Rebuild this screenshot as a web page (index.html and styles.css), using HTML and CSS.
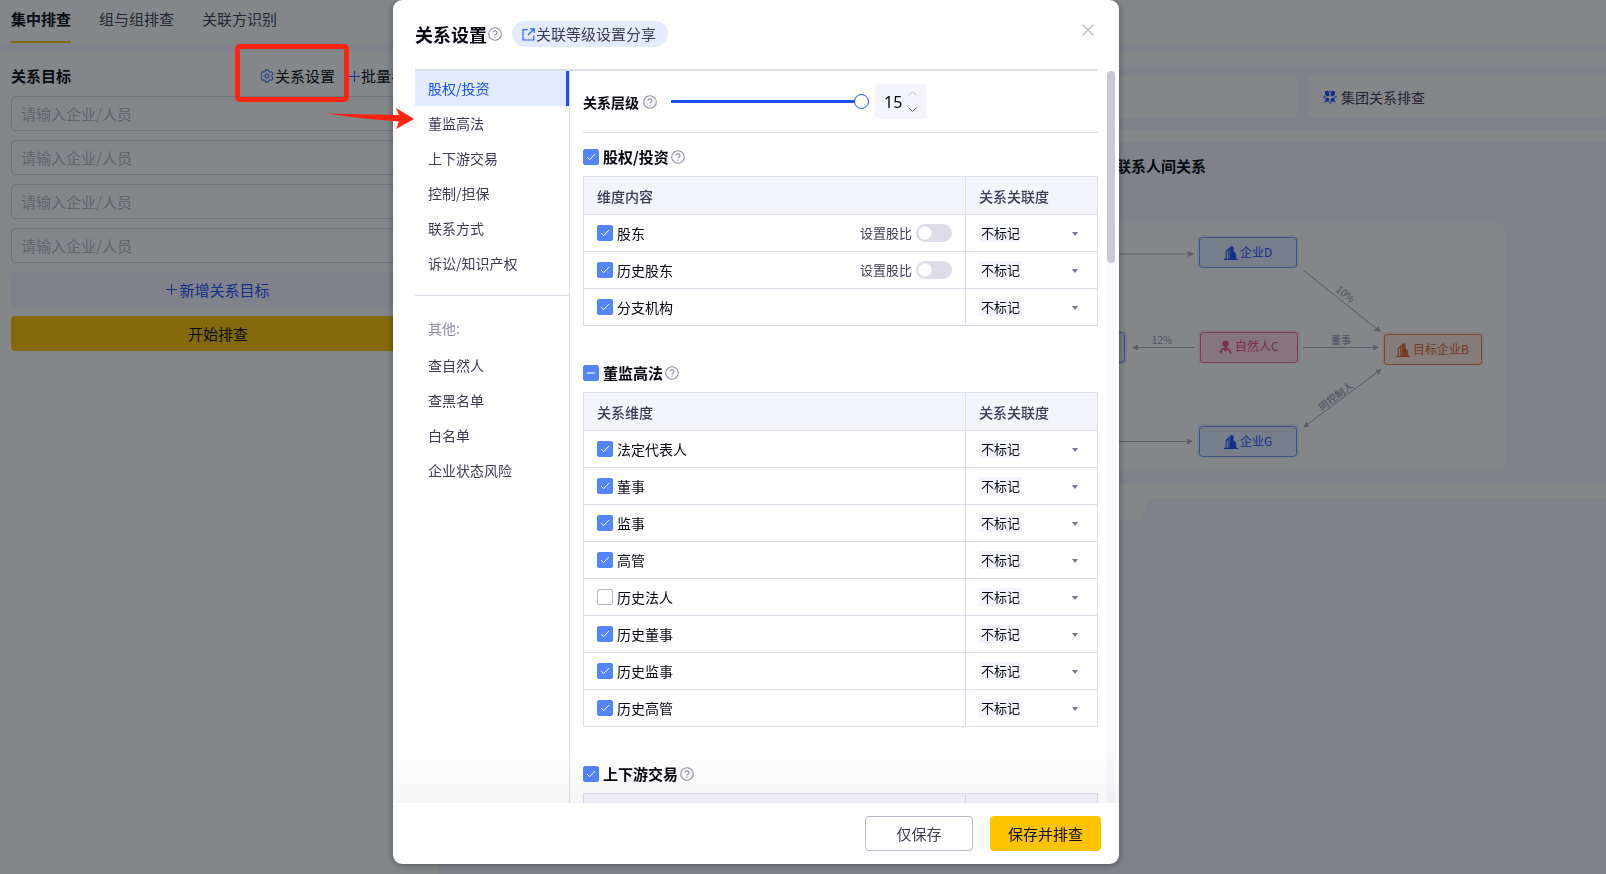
FILE: index.html
```html
<!DOCTYPE html>
<html lang="zh-CN">
<head>
<meta charset="utf-8">
<title>关系设置</title>
<link rel="stylesheet" href="styles.css">
</head>
<body>
<svg class="defs" aria-hidden="true">
  <symbol id="help" viewBox="0 0 14 14"><circle cx="7" cy="7" r="6.3" fill="none" stroke="#8c8da3" stroke-width="1.1"/><path d="M5.1 5.6a1.9 1.9 0 1 1 2.9 1.6c-.7.4-1 .7-1 1.3" fill="none" stroke="#8c8da3" stroke-width="1.1"/><circle cx="7" cy="10.2" r=".7" fill="#8c8da3"/></symbol>
  <symbol id="building" viewBox="0 0 14 14"><path d="M0 12.700h14V14H0zM1.700 13V5.200L5.300 1.500V13H4.200V4.700L2.800 6v7zM5.800 13V1L8 0l1.600 1.200v4l2.600 2.600V13z"/></symbol>
  <symbol id="person" viewBox="0 0 14 14"><circle cx="7" cy="3.4" r="3.4"/><path d="M5.900 6h2.200v1.600c3.400.6 5.300 2.700 5.300 6.400h-2c0-2.200-.9-3.700-2.500-4.300l-.8 1.800h-2.200l-.8-1.800C3.500 10.300 2.600 11.800 2.600 14h-2c0-3.700 1.900-5.800 5.300-6.400z"/></symbol>
</svg>

<div class="page">
  <nav class="tabs">
    <a class="tab tab-active" href="#">集中排查</a>
    <a class="tab" href="#">组与组排查</a>
    <a class="tab" href="#">关联方识别</a>
  </nav>
  <div class="workspace">
    <form class="targets">
      <div class="targets-head">
        <h2>关系目标</h2>
        <div class="targets-tools">
          <button type="button" class="tool"><svg width="14" height="14" viewBox="0 0 14 14" fill="none" stroke="#1a4fff" stroke-linejoin="round"><path d="M5.600.8h2.800l.4 1.700 1.200.7 1.700-.5 1.400 2.400-1.200 1.200v1.400l1.200 1.200-1.400 2.400-1.700-.5-1.200.7-.4 1.700H5.600l-.4-1.700-1.200-.7-1.700.5L.9 8.900l1.200-1.200V6.300L.9 5.100l1.400-2.400 1.700.5 1.200-.7z"/><circle cx="7" cy="7" r="2"/></svg>关系设置</button>
          <button type="button" class="tool tool-batch"><svg width="11" height="11" viewBox="0 0 11 11" stroke="#1a4fff"><path d="M5.500 0v11M0 5.500h11"/></svg>批量导入</button>
        </div>
      </div>
      <input type="text" aria-label="关系目标1" placeholder="请输入企业/人员">
      <input type="text" aria-label="关系目标2" placeholder="请输入企业/人员">
      <input type="text" aria-label="关系目标3" placeholder="请输入企业/人员">
      <input type="text" aria-label="关系目标4" placeholder="请输入企业/人员">
      <button type="button" class="add"><svg width="11" height="11" viewBox="0 0 11 11" stroke="#1a4fff"><path d="M5.500 0v11M0 5.500h11"/></svg>新增关系目标</button>
      <button type="button" class="start">开始排查</button>
    </form>
    <main class="results">
      <div class="modes">
        <div class="mode"></div>
        <a class="mode" href="#"><svg width="14" height="14" viewBox="0 0 14 14"><g fill="#1a4fff"><path d="M2 1h3l1.300 1.300v4H4L2 4.500zM12 1H9L7.700 2.300v4H10l2-1.800z"/><circle cx="4.300" cy="9.800" r="2.100"/><circle cx="9.700" cy="9.800" r="2.100"/></g><g fill="#6a94ff"><circle cx="1.400" cy="7" r="1.400"/><circle cx="12.600" cy="7" r="1.400"/><circle cx="7" cy="12.600" r="1.300"/><circle cx="7" cy="1.300" r="1"/><circle cx="2.200" cy="11.800" r="1"/><circle cx="11.800" cy="11.800" r="1"/></g></svg>集团关系排查</a>
      </div>
      <section class="example">
        <h2>排查企业及联系人间关系</h2>
        <div class="canvas">
          <svg class="graph" width="412" height="248" viewBox="1093 223 412 248">
            <defs><marker id="arrow" viewBox="0 0 6 6" refX="5" refY="3" markerWidth="6" markerHeight="6" markerUnits="userSpaceOnUse" orient="auto-start-reverse"><path d="M0 0l6 3-6 3z" fill="#a9aaba"/></marker></defs>
            <g stroke="#a9aaba">
              <path d="M1093 254h100" marker-end="url(#arrow)"/>
              <path d="M1093 441.500h99" marker-end="url(#arrow)"/>
              <path d="M1194 347.500h-61" marker-end="url(#arrow)"/>
              <path d="M1303 347.500h75" marker-end="url(#arrow)"/>
              <path d="M1303 270l77 61.500" marker-end="url(#arrow)"/>
              <path d="M1304 427l77-57.500" marker-start="url(#arrow)" marker-end="url(#arrow)"/>
            </g>
            <g class="edge-text">
              <text x="1162" y="344">12%</text>
              <text x="1341" y="344">董事</text>
              <text transform="translate(1343 297) rotate(38.600)">10%</text>
              <text transform="translate(1338 399) rotate(-36.700)">同控制人</text>
            </g>
            <g class="node node-blue"><rect class="glow" x="1026" y="331" width="101" height="33" rx="4"/><rect x="1027.500" y="332.500" width="97" height="30" rx="3"/></g>
            <g class="node node-blue"><rect class="glow" x="1197.500" y="235.500" width="101" height="33" rx="4"/><rect x="1199.500" y="237.500" width="97" height="30" rx="3"/><use href="#building" x="1224" y="246" width="14" height="14"/><text x="1240" y="257">企业D</text></g>
            <g class="node node-pink"><rect class="glow" x="1198.500" y="330.500" width="101" height="33" rx="4"/><rect x="1200.500" y="332.500" width="97" height="30" rx="3"/><use href="#person" x="1219" y="340" width="13" height="14"/><text x="1235" y="351">自然人C</text></g>
            <g class="node node-orange"><rect class="glow" x="1382.500" y="332.500" width="101" height="33" rx="4"/><rect x="1384.500" y="334.500" width="97" height="30" rx="3"/><use href="#building" x="1396" y="343" width="14" height="14"/><text x="1413" y="354">目标企业B</text></g>
            <g class="node node-blue"><rect class="glow" x="1197.500" y="424.500" width="101" height="33" rx="4"/><rect x="1199.500" y="426.500" width="97" height="30" rx="3"/><use href="#building" x="1224" y="435" width="14" height="14"/><text x="1240" y="446">企业G</text></g>
          </svg>
        </div>
      </section>
      <section class="lower"><div class="lower-tab"></div></section>
    </main>
  </div>
</div>

<div class="overlay">
  <div class="modal" role="dialog" aria-labelledby="modal-title">
    <header class="modal-head">
      <h1 id="modal-title">关系设置</h1>
      <svg class="help" width="14" height="14"><use href="#help"/></svg>
      <a class="share" href="#"><svg width="13" height="13" viewBox="0 0 13 13" fill="none" stroke="#2a60ff" stroke-width="1.200"><path d="M5.500 1.600H1v10.400h10.800V7.500M8 .8h4.200V5M12 1L6 7"/></svg>关联等级设置分享</a>
      <button type="button" class="close" aria-label="关闭"><svg width="12" height="12" viewBox="0 0 12 12" stroke="#bfc0c4" stroke-width="1.400"><path d="M.5.500l11 11M11.500.500l-11 11"/></svg></button>
    </header>
    <div class="modal-body">
      <nav class="side">
        <ul>
          <li><a class="side-active" href="#">股权/投资</a></li>
          <li><a href="#">董监高法</a></li>
          <li><a href="#">上下游交易</a></li>
          <li><a href="#">控制/担保</a></li>
          <li><a href="#">联系方式</a></li>
          <li><a href="#">诉讼/知识产权</a></li>
        </ul>
        <p>其他:</p>
        <ul>
          <li><a href="#">查自然人</a></li>
          <li><a href="#">查黑名单</a></li>
          <li><a href="#">白名单</a></li>
          <li><a href="#">企业状态风险</a></li>
        </ul>
      </nav>
      <div class="settings">
        <div class="level">
          <label for="level">关系层级</label>
          <svg class="help" width="14" height="14"><use href="#help"/></svg>
          <input id="level" type="range" min="1" max="15" value="15">
          <div class="stepper">
            <input type="text" value="15" aria-label="关系层级数值">
            <div class="steps">
              <button type="button" aria-label="增加" disabled><svg width="9" height="5" viewBox="0 0 9 5" fill="none" stroke="#c3c4d2"><path d="M.5 4.500l4-4 4 4"/></svg></button>
              <button type="button" aria-label="减少"><svg width="9" height="5" viewBox="0 0 9 5" fill="none" stroke="#66677d"><path d="M.5.500l4 4 4-4"/></svg></button>
            </div>
          </div>
        </div>

        <section class="group">
          <h2><label><input type="checkbox" checked>股权/投资</label><svg class="help" width="14" height="14"><use href="#help"/></svg></h2>
          <table>
            <thead><tr><th>维度内容</th><th class="rank">关系关联度</th></tr></thead>
            <tbody>
              <tr><td><div class="cell"><label><input type="checkbox" checked>股东</label><label class="ratio">设置股比<input type="checkbox" role="switch" class="switch"></label></div></td><td><div class="pick"><select aria-label="股东关联度"><option>不标记</option></select></div></td></tr>
              <tr><td><div class="cell"><label><input type="checkbox" checked>历史股东</label><label class="ratio">设置股比<input type="checkbox" role="switch" class="switch"></label></div></td><td><div class="pick"><select aria-label="历史股东关联度"><option>不标记</option></select></div></td></tr>
              <tr><td><div class="cell"><label><input type="checkbox" checked>分支机构</label></div></td><td><div class="pick"><select aria-label="分支机构关联度"><option>不标记</option></select></div></td></tr>
            </tbody>
          </table>
        </section>

        <section class="group">
          <h2><label><input type="checkbox" class="partial">董监高法</label><svg class="help" width="14" height="14"><use href="#help"/></svg></h2>
          <table>
            <thead><tr><th>关系维度</th><th class="rank">关系关联度</th></tr></thead>
            <tbody>
              <tr><td><div class="cell"><label><input type="checkbox" checked>法定代表人</label></div></td><td><div class="pick"><select aria-label="法定代表人关联度"><option>不标记</option></select></div></td></tr>
              <tr><td><div class="cell"><label><input type="checkbox" checked>董事</label></div></td><td><div class="pick"><select aria-label="董事关联度"><option>不标记</option></select></div></td></tr>
              <tr><td><div class="cell"><label><input type="checkbox" checked>监事</label></div></td><td><div class="pick"><select aria-label="监事关联度"><option>不标记</option></select></div></td></tr>
              <tr><td><div class="cell"><label><input type="checkbox" checked>高管</label></div></td><td><div class="pick"><select aria-label="高管关联度"><option>不标记</option></select></div></td></tr>
              <tr><td><div class="cell"><label><input type="checkbox">历史法人</label></div></td><td><div class="pick"><select aria-label="历史法人关联度"><option>不标记</option></select></div></td></tr>
              <tr><td><div class="cell"><label><input type="checkbox" checked>历史董事</label></div></td><td><div class="pick"><select aria-label="历史董事关联度"><option>不标记</option></select></div></td></tr>
              <tr><td><div class="cell"><label><input type="checkbox" checked>历史监事</label></div></td><td><div class="pick"><select aria-label="历史监事关联度"><option>不标记</option></select></div></td></tr>
              <tr><td><div class="cell"><label><input type="checkbox" checked>历史高管</label></div></td><td><div class="pick"><select aria-label="历史高管关联度"><option>不标记</option></select></div></td></tr>
            </tbody>
          </table>
        </section>

        <section class="group">
          <h2><label><input type="checkbox" checked>上下游交易</label><svg class="help" width="14" height="14"><use href="#help"/></svg></h2>
          <table>
            <thead><tr><th></th><th class="rank"></th></tr></thead>
          </table>
        </section>
      </div>
      <div class="scrollbar"><div class="thumb"></div></div>
      <div class="fade"></div>
    </div>
    <footer class="modal-foot">
      <button type="button" class="btn">仅保存</button>
      <button type="button" class="btn btn-primary">保存并排查</button>
    </footer>
  </div>
</div>

<div class="callout-box"></div>
<svg class="callout-arrow" width="90" height="22" viewBox="0 0 90 22"><path d="M0 5.500L74 7 71 0l18 11-18 10 3-7.500C50 12 24 9 0 5.500z" fill="#ff2312"/></svg>
</body>
</html>
```
FILE: styles.css
```css
* { box-sizing: border-box; }

body {
  margin: 0;
  height: 100vh;
  overflow: hidden;
  background: #fff;
  color: #05060f;
  font: 15px/22px "Noto Sans CJK SC", "Noto Sans", sans-serif;
}

h1, h2, p, ul { margin: 0; padding: 0; font-weight: 400; }
ul { list-style: none; }
a { color: inherit; text-decoration: none; }
button, input, select { margin: 0; padding: 0; border: 0; background: none; color: inherit; font: inherit; }
svg { flex: none; }
.defs { position: absolute; width: 0; height: 0; }

/* Page behind the dialog */
.page { display: flex; flex-direction: column; height: 100vh; }
.tabs {
  display: flex;
  gap: 28px;
  height: 51px;
  padding: 0 11px;
  border-bottom: 8px solid #f4f4ff;
}
.tab { padding-top: 8px; color: #3c3b54; }
.tab-active { border-bottom: 2px solid #ffc400; color: #05060f; font-weight: 700; }
.workspace { display: flex; flex: 1; min-height: 0; }

.targets {
  display: flex;
  flex: none;
  flex-direction: column;
  gap: 9px;
  width: 438px;
  padding: 14px 13px 0 11px;
}
.targets-head { display: flex; justify-content: space-between; height: 22px; }
.targets h2 { font-size: 15px; font-weight: 700; }
.targets-tools { display: flex; gap: 14px; margin-right: 4px; }
.tool { display: flex; align-items: center; gap: 1px; white-space: nowrap; }
.targets input {
  height: 35px;
  padding: 0 9px;
  border: 1px solid #d5d6e2;
  border-radius: 4px;
}
.targets input::placeholder { color: #b5b6c4; opacity: 1; }
.add, .start { height: 35px; border-radius: 4px; }
.add {
  display: flex;
  align-items: center;
  justify-content: center;
  gap: 2px;
  background: #f4f4ff;
  color: #1a4fff;
}
.start { background: #ffc400; }

.results { display: flex; flex: 1; flex-direction: column; min-width: 0; padding-top: 14px; }
.modes {
  display: grid;
  grid-template-columns: 283fr 100fr;
  gap: 11px;
  margin-bottom: 12px;
  padding: 11px 0 12px 16px;
  background: #f4f4ff;
}
.mode {
  display: flex;
  align-items: center;
  gap: 4px;
  height: 42px;
  padding-left: 15px;
  border-radius: 4px;
  background: #fff;
  color: #3c3b54;
  font-size: 14px;
}
.example { padding: 13px 101px 13px 16px; background: #f4f4ff; }
.example h2 { padding-left: 587px; font-size: 15px; font-weight: 700; white-space: nowrap; }
.canvas {
  display: flex;
  justify-content: flex-end;
  margin-top: 46px;
  overflow: hidden;
  border-radius: 8px;
  background: #fff;
}
.graph { font-size: 12px; }
.edge-text { fill: #8c8da3; font-size: 10px; text-anchor: middle; }
.node rect { stroke-width: 1; }
.node .glow { stroke: none; opacity: .5; }
.node-blue { fill: #1a4fff; }
.node-blue rect { fill: #e2ecff; stroke: #6a94ff; }
.node-blue .glow { fill: #c2d4ff; }
.node-pink { fill: #ec4f7d; }
.node-pink rect { fill: #ffdbe6; stroke: #f0638c; }
.node-pink .glow { fill: #ffb9cd; }
.node-orange { fill: #e5632b; }
.node-orange rect { fill: #ffebdf; stroke: #ea7a48; }
.node-orange .glow { fill: #ffc7a8; }
.lower { flex: 1; margin-top: 14px; background: #f4f4ff; }
.lower-tab {
  width: 712px;
  height: 22px;
  background: #fff;
  clip-path: polygon(0 0, 100% 0, 703px 100%, 0 100%);
}

/* Dialog */
.overlay {
  position: fixed;
  inset: 0;
  display: flex;
  justify-content: center;
  padding: 0 94px 10px 0;
  background: rgba(10, 15, 21, .5);
}
.modal {
  display: flex;
  flex-direction: column;
  width: 726px;
  overflow: hidden;
  border-radius: 9px;
  background: #fff;
  box-shadow: 0 1px 6px rgba(0, 0, 0, .4);
}
.modal-head {
  display: flex;
  flex: none;
  align-items: center;
  height: 69px;
  padding: 0 25px 1px 22px;
}
.modal-head h1 { margin-right: 1px; font-size: 18px; font-weight: 700; }
.share {
  display: flex;
  align-items: center;
  gap: 1px;
  height: 26px;
  margin-left: 10px;
  padding: 0 12px 0 10px;
  border-radius: 13px;
  background: #e3ecff;
  color: #3c3b54;
}
.close { display: flex; margin: 0 0 9px auto; }

.modal-body { position: relative; display: flex; flex: 1; min-height: 0; margin-left: 22px; }
.modal-body::before {
  position: absolute;
  inset: 0 22px auto 0;
  height: 2px;
  background: #dcdde9;
  content: "";
}
.side {
  flex: none;
  width: 155px;
  padding-top: 2px;
  border-right: 1px solid #dcdde9;
  color: #3c3b54;
  font-size: 14px;
}
.side a { display: block; height: 35px; padding: 0 13px; line-height: 35px; }
.side .side-active { border-right: 3px solid #1a4fff; background: #e3ecff; color: #1a4fff; }
.side p { margin-top: 14px; padding: 20px 13px 8px; border-top: 1px solid #dcdde9; color: #8c8da3; line-height: 24px; }

.settings { flex: 1; min-width: 0; padding: 2px 9px 0 13px; overflow: hidden; }
.level {
  display: flex;
  align-items: center;
  height: 62px;
  border-bottom: 1px solid #dcdde9;
  font-size: 14px;
  font-weight: 700;
}
.level .help { margin: 0 14px 0 4px; }
.level input[type="range"] { width: 198px; height: 15px; appearance: none; }
.level input[type="range"]::-webkit-slider-runnable-track {
  height: 15px;
  background: linear-gradient(#1a4fff, #1a4fff) center / 100% 3px no-repeat;
}
.level input[type="range"]::-webkit-slider-thumb {
  width: 15px;
  height: 15px;
  appearance: none;
  border: 1px solid #1a4fff;
  border-radius: 50%;
  background: #fff;
}
.stepper {
  display: flex;
  align-items: center;
  width: 51px;
  height: 35px;
  margin-left: 6px;
  padding-left: 9px;
  border-radius: 4px;
  background: #f4f4fd;
  font-weight: 400;
}
.stepper input { width: 24px; font: 16px "Noto Sans", sans-serif; }
.steps { display: flex; flex-direction: column; gap: 11px; }
.steps button { display: flex; }

.group { padding-bottom: 28px; }
.level + .group { padding-top: 5px; }
.group h2 { display: flex; align-items: center; height: 38px; font-size: 15px; font-weight: 700; }
.group h2 .help { margin-left: 2px; }
.group label { display: flex; align-items: center; gap: 4px; }
.group input[type="checkbox"] {
  flex: none;
  width: 16px;
  height: 16px;
  appearance: none;
  border: 1px solid #b5b6c8;
  border-radius: 2px;
}
.group input[type="checkbox"]:checked {
  border-color: #5285ff;
  background: #5285ff url("data:image/svg+xml,%3Csvg xmlns='http://www.w3.org/2000/svg' viewBox='0 0 14 14'%3E%3Cpath d='M3 7l2.700 2.700 5.300-5.700' fill='none' stroke='%23fff'/%3E%3C/svg%3E") center / 14px no-repeat;
}
.group .partial[type="checkbox"] {
  border-color: #5285ff;
  background: linear-gradient(#b4caff, #b4caff) center / 8px 2px no-repeat #5285ff;
}
.group .switch[type="checkbox"] {
  width: 36px;
  height: 18px;
  border: 0;
  border-radius: 9px;
  background: radial-gradient(circle at 9px 9px, #fff 6px, #dcdde9 7px);
}

table { width: 100%; border-collapse: collapse; table-layout: fixed; font-size: 14px; line-height: 20px; }
th, td { height: 37px; padding: 0 13px; border: 1px solid #dcdde9; text-align: left; }
th { height: 38px; background: #f4f4fd; color: #3c3b54; font-weight: 500; }
.rank { width: 132px; }
.cell { display: flex; align-items: center; justify-content: space-between; }
.cell .ratio { color: #3c3b54; font-size: 13px; }
.pick { position: relative; }
.pick::after {
  position: absolute;
  top: 8px;
  right: 6px;
  border: 3px solid transparent;
  border-top: 4px solid #74758b;
  border-bottom: 0;
  content: "";
  pointer-events: none;
}
select {
  display: block;
  width: 100%;
  height: 18px;
  padding: 0 2px;
  appearance: none;
  background: linear-gradient(#f4f4fd, #f4f4fd) left / 43px 18px no-repeat;
  font-size: 13px;
  line-height: 18px;
}

.scrollbar { flex: none; width: 8px; margin: 2px 4px 0 0; border-radius: 4px; background: #f8f9fe; }
.thumb { height: 192px; border-radius: 4px; background: #c9c9d3; }
.fade {
  position: absolute;
  inset: auto 0 0 -22px;
  height: 54px;
  background: linear-gradient(transparent, rgba(0, 0, 0, .035));
  pointer-events: none;
}
.modal-foot {
  display: flex;
  flex: none;
  align-items: center;
  justify-content: flex-end;
  gap: 17px;
  height: 61px;
  padding-right: 18px;
}
.btn { min-width: 108px; height: 35px; padding: 0 17px; border: 1px solid #b5b6c8; border-radius: 4px; color: #3c3b54; }
.btn-primary { border-color: #ffc300; background: #ffc300; color: #05060f; }

/* Red annotation over the page */
.callout-box {
  position: absolute;
  top: 44px;
  left: 235px;
  width: 114px;
  height: 58px;
  border: 5px solid #ff2312;
  border-radius: 5px;
}
.callout-arrow { position: absolute; top: 108px; left: 325px; }
```
